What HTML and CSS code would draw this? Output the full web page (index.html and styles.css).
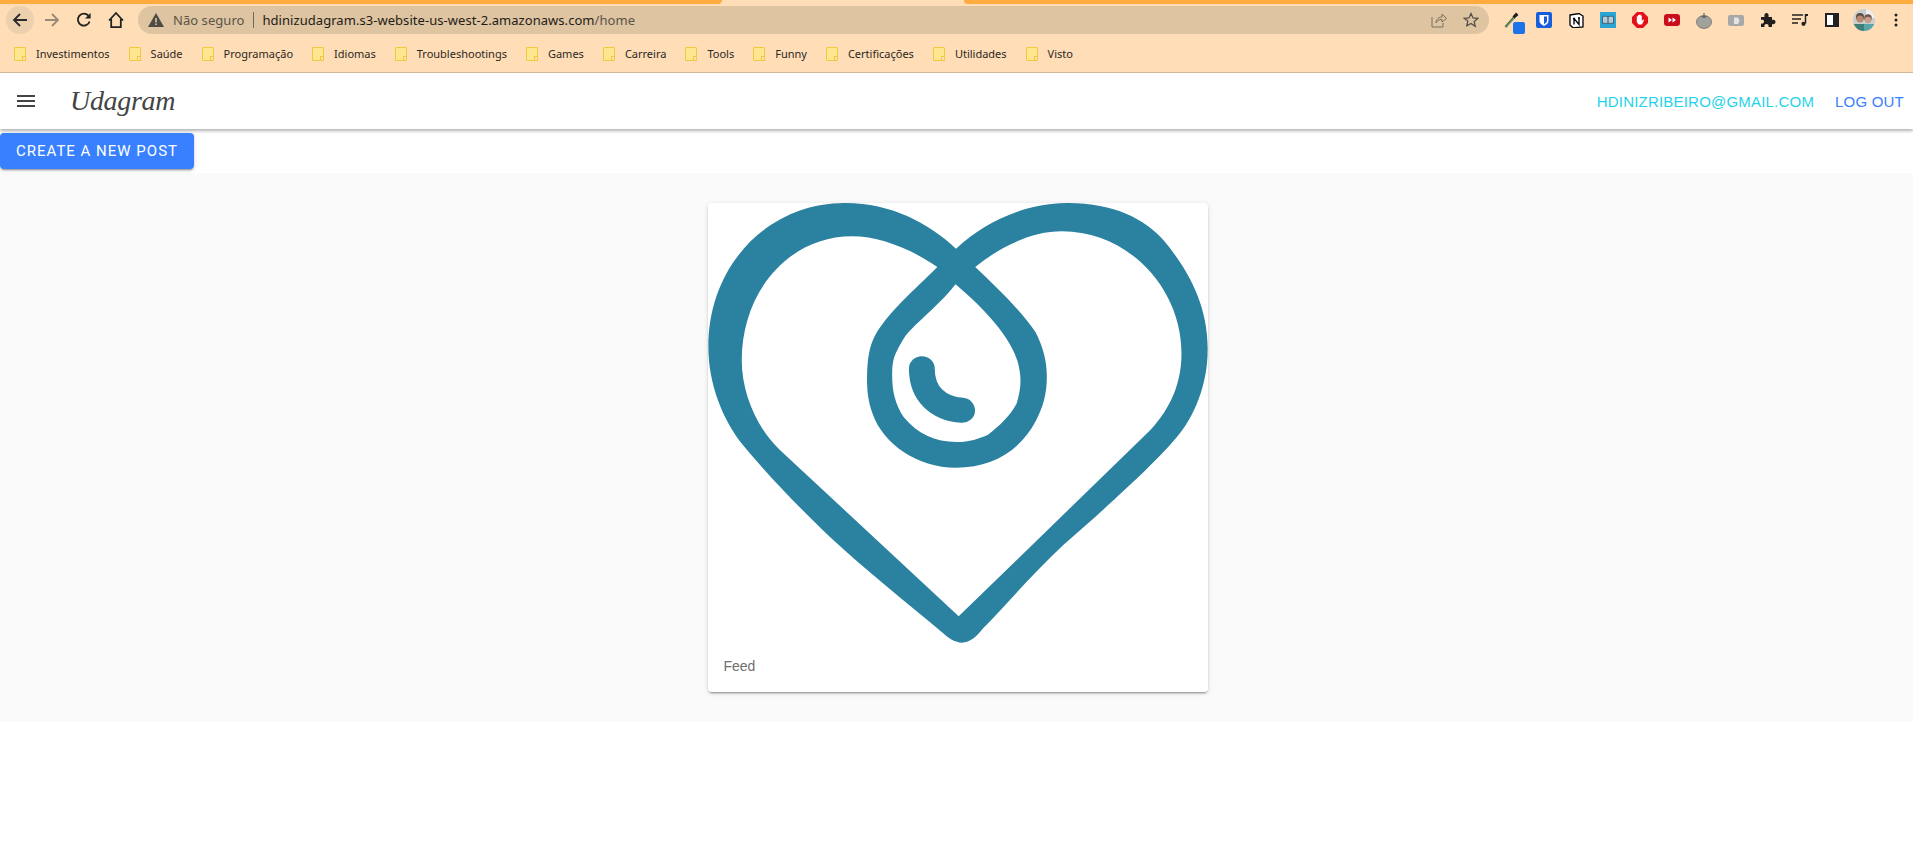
FILE: index.html
```html
<!DOCTYPE html>
<html>
<head>
    <title>Udagram</title>
    <link rel="stylesheet" href="styles.css">
</head>
<body>
    <div class="tabstrip">
        <div class="tab-left"></div>
        <div class="tab-active"></div>
        <div class="tab-right"></div>
    </div>

    <div class="toolbar">
        <div class="tool tool-back">
            <svg width="16" height="16" viewBox="0 0 16 16"><path d="M15 8H2M8 2L2 8l6 6" fill="none" stroke="#2a2a2a" stroke-width="1.8"/></svg>
        </div>
        <div class="tool">
            <svg width="16" height="16" viewBox="0 0 16 16"><path d="M1 8h13M8 2l6 6-6 6" fill="none" stroke="#978a78" stroke-width="1.8"/></svg>
        </div>
        <div class="tool">
            <svg width="16" height="16" viewBox="0 0 16 16"><path d="M13.600 9.500A6 6 0 1 1 12.400 3.600" fill="none" stroke="#222" stroke-width="1.800"/><path d="M14.600 1v5.600H9z" fill="#222"/></svg>
        </div>
        <div class="tool">
            <svg width="18" height="18" viewBox="0 0 18 18"><path d="M2 9.500L9 2l7 7.500M4.200 8v8.200h9.600V8" fill="none" stroke="#222" stroke-width="1.800"/></svg>
        </div>
        <div class="omnibox">
            <svg class="warn" width="16" height="14" viewBox="0 0 16 14"><path d="M8 0l8 14H0z" fill="#4e4a44"/><path d="M7.200 5h1.600v4.400H7.200zM7.200 10.400h1.600v1.600H7.200z" fill="#dec4a1"/></svg>
            <span class="insecure">Não seguro</span>
            <span class="divider"></span>
            <span class="url">hdinizudagram.s3-website-us-west-2.amazonaws.com<span class="url-path">/home</span></span>
            <span class="omni-space"></span>
            <svg class="omni-icon" width="16" height="16" viewBox="0 0 16 16"><path d="M1 5v10h11v-4M5 11c0-4 3-6 6-6V2l4.500 4.500L11 10V7.500c-3 0-5 1-6 3.500z" fill="none" stroke="#77705f" stroke-width="1"/></svg>
            <svg class="omni-icon" width="16" height="16" viewBox="0 0 16 16"><path d="M8 1.500l2 4.400 4.800.5-3.600 3.200 1 4.700L8 11.400l-4.200 2.400 1-4.700L1.200 6.400 6 5.900z" fill="none" stroke="#55504a" stroke-width="1.300"/></svg>
        </div>
        <div class="extensions">
            <div class="tool dropper">
                <svg width="16" height="18" viewBox="0 0 16 18"><path d="M1.500 16L10 6.500" stroke="#3f6b3c" stroke-width="2.400"/><path d="M2.500 15.500L10 7" stroke="#b9c9ae" stroke-width=".7"/><path d="M8.500 5.500l3.500-4 2.500 2.500-4 3.500z" fill="#1f1f1f"/></svg>
                <span class="badge"></span>
            </div>
            <div class="tool">
                <svg width="16" height="16" viewBox="0 0 16 16"><rect width="16" height="16" rx="2" fill="#175ddc"/><path d="M3.500 3h9v6c0 2.500-2.500 3.800-4.500 5-2-1.200-4.500-2.500-4.500-5z" fill="#fff"/><path d="M8 4.500h3V9c0 1.500-1.600 2.400-3 3.200z" fill="#175ddc"/></svg>
            </div>
            <div class="tool">
                <svg width="15" height="15" viewBox="0 0 15 15"><path d="M1 2l9-1.500L14 3v11l-10 .8L1 12z" fill="#fff" stroke="#000" stroke-width="1.300"/><path d="M5 5.500v6M5 5.500l5 6V5M4 5.500h2M9 5h2" fill="none" stroke="#000" stroke-width="1.300"/></svg>
            </div>
            <div class="tool">
                <svg width="16" height="16" viewBox="0 0 16 16"><rect width="16" height="16" fill="#29a6d6"/><path d="M2.500 4.500C4.500 4 6.500 4 8 5c1.500-1 3.500-1 5.500-.5v7c-2-.5-4-.5-5.500.5-1.500-1-3.500-1-5.500-.5z" fill="#b5ccd6" stroke="#2f4f60" stroke-width=".8"/><path d="M8 5v7" stroke="#2f4f60"/></svg>
            </div>
            <div class="tool">
                <svg width="16" height="16" viewBox="0 0 16 16"><path d="M5 0h6l5 5v6l-5 5H5l-5-5V5z" fill="#e3101a"/><path d="M4.800 7V4.200h1.200V7 3h1.300v4V2.500h1.300V7V3.500h1.200v5.500l1.300-1.500 1 .6-2.100 4.400H6.500L4.800 10z" fill="#fff"/></svg>
            </div>
            <div class="tool">
                <svg width="16" height="12" viewBox="0 0 16 12"><rect width="16" height="12" rx="3" fill="#c80d1c"/><path d="M4.500 3.500L8 6l-3.500 2.500zM8.500 3.500L12 6l-3.500 2.500z" fill="#fff"/></svg>
            </div>
            <div class="tool">
                <svg width="16" height="17" viewBox="0 0 16 17"><ellipse cx="8" cy="10" rx="7.500" ry="6.500" fill="#a0a09c" stroke="#6f6f6a" stroke-width=".8"/><path d="M8 1v5M5.500 4.500L8 5.500l2.500-1" fill="none" stroke="#5b5b57" stroke-width="1.100"/></svg>
            </div>
            <div class="tool">
                <svg width="16" height="11" viewBox="0 0 16 11"><rect width="16" height="11" rx="2" fill="#a8a8a8"/><path d="M6 2.500h4l1.500 3L10 9H6z" fill="#e4e4e4"/></svg>
            </div>
            <div class="tool">
                <svg width="16" height="16" viewBox="0 0 16 16"><path d="M1 5h3.500C4 2.500 5 1 6.500 1S9 2.500 8.500 5H12v3c2-.6 3.500.3 3.500 2s-1.500 2.600-3.500 2v3H8.500c.5-2-.5-3-2-3s-2.500 1-2 3H1v-3.500c2 .5 3-.5 3-2S3 7.500 1 8z" fill="#1f1f1f"/></svg>
            </div>
            <div class="tool">
                <svg width="16" height="12" viewBox="0 0 16 12"><path d="M0 1h11M0 5h9M0 9h6" stroke="#222" stroke-width="1.300"/><path d="M13.500 0v9.500" stroke="#222" stroke-width="1.500"/><path d="M14 0h2v2h-2z" fill="#222"/><circle cx="11.500" cy="9.800" r="2.100" fill="#222"/></svg>
            </div>
            <div class="tool">
                <svg width="14" height="14" viewBox="0 0 14 14"><rect width="14" height="14" fill="#202124"/><rect x="2" y="2" width="6" height="10" fill="#fff"/></svg>
            </div>
            <div class="tool">
                <svg width="22" height="22" viewBox="0 0 22 22"><clipPath id="face"><circle cx="11" cy="11" r="11"/></clipPath><g clip-path="url(#face)"><rect width="22" height="22" fill="#c9cfcf"/><rect x="13" width="9" height="9" fill="#f2f2f2"/><circle cx="7" cy="8" r="4" fill="#5d4a3f"/><circle cx="7" cy="10" r="3.600" fill="#b9876d"/><circle cx="15" cy="9" r="3.800" fill="#6e5648"/><circle cx="15" cy="11" r="3.200" fill="#c99d86"/><rect y="15" width="11" height="7" fill="#3f7f7a"/><rect x="11" y="15" width="11" height="7" fill="#58a6ac"/></g></svg>
            </div>
            <div class="tool">
                <svg width="4" height="14" viewBox="0 0 4 14"><circle cx="2" cy="2" r="1.500" fill="#222"/><circle cx="2" cy="7" r="1.500" fill="#222"/><circle cx="2" cy="12" r="1.500" fill="#222"/></svg>
            </div>
        </div>
    </div>

    <div class="bookmarks">
        <div class="bookmark"><span class="folder"></span>Investimentos</div>
        <div class="bookmark"><span class="folder"></span>Saúde</div>
        <div class="bookmark"><span class="folder"></span>Programação</div>
        <div class="bookmark"><span class="folder"></span>Idiomas</div>
        <div class="bookmark"><span class="folder"></span>Troubleshootings</div>
        <div class="bookmark"><span class="folder"></span>Games</div>
        <div class="bookmark"><span class="folder"></span>Carreira</div>
        <div class="bookmark"><span class="folder"></span>Tools</div>
        <div class="bookmark"><span class="folder"></span>Funny</div>
        <div class="bookmark"><span class="folder"></span>Certificações</div>
        <div class="bookmark"><span class="folder"></span>Utilidades</div>
        <div class="bookmark"><span class="folder"></span>Visto</div>
    </div>

    <header class="navbar">
        <div class="menu-icon"><span></span><span></span><span></span></div>
        <div class="brand">Udagram</div>
        <div class="nav-right">
            <a class="nav-email">hdinizribeiro@gmail.com</a>
            <a class="nav-logout">Log out</a>
        </div>
    </header>

    <div class="actions">
        <button class="new-post">Create a new post</button>
    </div>

    <main class="feed">
        <div class="card">
            <svg class="card-img" width="500" height="440" viewBox="0 0 500 440">
                <g transform="matrix(0.34435 0 0 0.33333 -17.9 -12.67)" fill="#2b82a0">
                    <path fill-rule="evenodd" d="M772,175 C860,90 980,38 1095,38 C1230,38 1320,85 1375,150 C1440,230 1505,340 1503,480 C1503,580 1465,680 1413,741 C1350,820 1210,950 1083,1065 C1000,1145 925,1235 851,1314 C830,1342 810,1357 789,1357 C770,1357 752,1345 735,1329 C620,1230 500,1130 407,1041 C330,965 230,860 154,765 C95,690 53,580 53,470 C53,220 230,38 450,38 C580,38 690,95 772,175 Z
                    M718,230 C640,175 550,138 470,138 C290,138 150,300 150,510 C150,610 195,715 260,778 L780,1278 L1327,729 C1385,670 1427,590 1427,490 C1427,290 1270,123 1080,123 C990,123 900,170 828,230 C890,290 960,360 1003,425 C1025,470 1036,510 1036,560 C1036,610 1025,650 1005,690 C960,780 880,832 772,832 C660,832 560,760 530,670 C515,630 513,590 514,550 C515,510 520,470 535,440 C570,370 650,300 718,230 Z
                    M771,282 C710,360 650,400 620,445 C600,480 588,500 587,540 C585,600 595,640 620,680 C660,730 710,755 775,755 C810,755 840,745 865,733 C900,705 930,675 948,640 C960,600 963,570 955,530 C940,450 860,360 771,282 Z"/>
                    <path d="M673,535 C673,610 720,655 790,660" fill="none" stroke="#2b82a0" stroke-width="75" stroke-linecap="round"/>
                </g>
            </svg>
            <div class="card-content">Feed</div>
        </div>
    </main>
</body>
</html>
```

FILE: styles.css
```css
body {
    margin: 0;
    background: #fff;
    font-family: "Liberation Sans", Arial, sans-serif;
}

/* browser chrome */
.tabstrip {
    display: flex;
    height: 4px;
    background: #ffddb6;
}
.tab-left {
    width: 722px;
    background: #ffab40;
    border-bottom-right-radius: 4px;
}
.tab-active {
    width: 242px;
}
.tab-right {
    flex: 1;
    background: #ffab40;
    border-bottom-left-radius: 4px;
}
.toolbar {
    display: flex;
    align-items: center;
    height: 32px;
    padding-left: 4px;
    padding-right: 1px;
    background: #ffddb6;
}
.tool {
    position: relative;
    display: flex;
    align-items: center;
    justify-content: center;
    width: 32px;
    height: 28px;
    flex-shrink: 0;
}
.tool-back {
    width: 28px;
    margin: 0 2px;
    border-radius: 50%;
    background: #ecd1ae;
}
.omnibox {
    flex: 1;
    display: flex;
    align-items: center;
    height: 28px;
    margin-left: 6px;
    padding: 0 10px;
    border-radius: 14px;
    background: #dec4a1;
    font-family: "Noto Sans", "Open Sans", sans-serif;
    font-size: 13px;
    letter-spacing: 0.05px;
    color: #1f1c18;
}
.warn {
    margin-right: 9px;
}
.insecure {
    color: #5a544a;
}
.divider {
    width: 1px;
    height: 16px;
    margin: 0 8px 0 9px;
    background: #6e675b;
}
.url-path {
    color: #5a544a;
}
.omni-space {
    flex: 1;
}
.omni-icon {
    margin-left: 16px;
}
.extensions {
    display: flex;
    margin-left: 7px;
}
.badge {
    position: absolute;
    right: 3px;
    bottom: 0;
    width: 12px;
    height: 12px;
    border-radius: 2px;
    background: #1a73e8;
}
.bookmarks {
    display: flex;
    align-items: center;
    gap: 19px;
    height: 34px;
    padding: 0 0 2px 14px;
    background: #ffddb6;
    border-bottom: 1px solid #d6bb9c;
    font-family: "Noto Sans", "Open Sans", sans-serif;
    font-size: 11px;
    color: #2b2823;
}
.bookmark {
    display: flex;
    align-items: center;
}
.folder {
    position: relative;
    box-sizing: border-box;
    width: 12px;
    height: 14px;
    margin: 2px 10px 0 0;
    background: #fde68f;
    border: 1px solid #f0c93e;
    border-radius: 1px;
}
.folder::after {
    content: "";
    position: absolute;
    right: -1px;
    bottom: -1px;
    width: 2px;
    height: 3px;
    border: 1px solid #f0c93e;
    background: #ffddb6;
}

/* app header */
.navbar {
    display: flex;
    align-items: center;
    height: 56px;
    padding: 0 9px 0 17px;
    background: #fff;
    box-shadow: 0 2px 3px rgba(0, 0, 0, 0.3);
}
.menu-icon {
    display: flex;
    flex-direction: column;
    gap: 3px;
    width: 18px;
}
.menu-icon span {
    height: 2px;
    background: #444;
}
.brand {
    margin-left: 35px;
    font-family: "Liberation Serif", serif;
    font-style: italic;
    font-size: 28px;
    letter-spacing: -0.3px;
    color: #444;
}
.nav-right {
    display: flex;
    gap: 21px;
    margin-left: auto;
    font-size: 15px;
    letter-spacing: 0.2px;
    text-transform: uppercase;
}
.nav-email {
    color: #1fd3ea;
}
.nav-logout {
    color: #3880ff;
}

/* page */
.actions {
    display: flex;
    height: 44px;
    padding: 4px 0;
    box-sizing: border-box;
}
.new-post {
    width: 194px;
    height: 36px;
    padding: 0;
    border: none;
    border-radius: 4px;
    background: #3880ff;
    color: #fff;
    font-family: Roboto, sans-serif;
    font-size: 15px;
    letter-spacing: 1px;
    text-transform: uppercase;
    box-shadow: 0 3px 1px -2px rgba(0, 0, 0, 0.2), 0 2px 2px rgba(0, 0, 0, 0.14), 0 1px 5px rgba(0, 0, 0, 0.12);
}
.feed {
    display: flex;
    justify-content: center;
    padding: 30px 0 30px 2px;
    background: #fafafa;
}
.card {
    width: 500px;
    border-radius: 4px;
    background: #fff;
    box-shadow: 0 3px 1px -2px rgba(0, 0, 0, 0.2), 0 2px 2px rgba(0, 0, 0, 0.14), 0 1px 5px rgba(0, 0, 0, 0.12);
}
.card-img {
    display: block;
}
.card-content {
    padding: 13px 16px 16px;
    font-size: 14px;
    line-height: 20px;
    color: #6f6f6f;
}
```
